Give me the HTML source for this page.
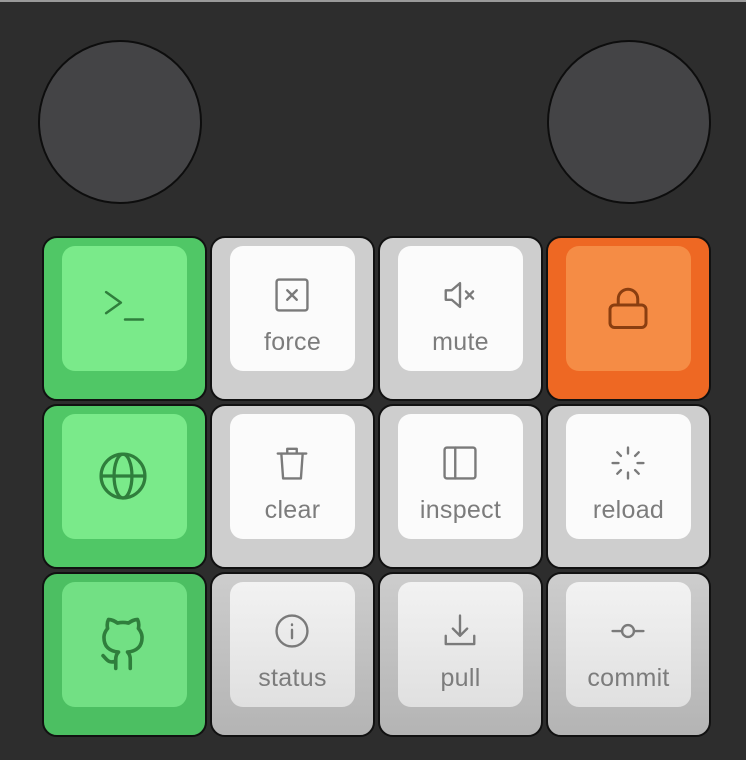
<!DOCTYPE html>
<html><head><style>
html,body{margin:0;padding:0}
body{width:746px;height:760px;background:#2d2d2d;position:relative;overflow:hidden;font-family:"Liberation Sans",sans-serif;border-top:2px solid #9a9a9a;box-sizing:border-box}
.c{position:absolute;width:164px;height:164px;border-radius:50%;background:#444446;border:2px solid #0d0d0d;top:38px;box-sizing:border-box}
.k{position:absolute;width:165px;height:165px;border:2px solid #111;border-radius:15px;box-sizing:border-box}
.i{position:absolute;left:18px;top:8px;width:125px;height:125px;border-radius:13px;text-align:center}
.i svg{position:absolute;left:43px;top:30px;width:38px;height:38px;fill:none;stroke-width:2;stroke-linecap:round;stroke-linejoin:round}
.i span{position:absolute;left:0;right:0;top:82px;font-size:25px;color:#7c7c7c;letter-spacing:.3px}
.g{background:#50c766}.g .i{background:#7aea8a}.g svg{stroke:#2f7e3c}
.w{background:#cecece}.w .i{background:#fbfbfb}.w svg{stroke:#7a7a7a}
.w2{background:linear-gradient(#cdcdcd,#b4b4b4)}.w2 .i{background:linear-gradient(#f2f2f2,#e0e0e0)}.w2 svg{stroke:#7a7a7a}
.o{background:#ee6823}.o .i{background:#f58c45}.o svg{stroke:#8a3e10}
.g3{background:#4cbf62}.g3 .i{background:#72e084}.g3 svg{stroke:#2f7e3c}
</style></head><body>
<div class="c" style="left:38px"></div>
<div class="c" style="left:547px"></div>

<div class="k g" style="left:42px;top:234px"><div class="i"><svg viewBox="0 0 40 40" style="width:42px;height:42px;left:41px;top:43px;stroke-width:2.4"><path d="M3 3l14 10-14 10M21 29h17"/></svg></div></div>
<div class="k w" style="left:210px;top:234px"><div class="i"><svg viewBox="0 0 32 32"><rect x="3" y="3" width="26" height="26" rx="2"/><path d="M12 12l8 8M20 12l-8 8"/></svg><span>force</span></div></div>
<div class="k w" style="left:378px;top:234px"><div class="i"><svg viewBox="0 0 32 32"><path d="M4 12h5l7-6v20l-7-6H4z"/><path d="M21 13l6 6M27 13l-6 6"/></svg><span>mute</span></div></div>
<div class="k o" style="left:546px;top:234px"><div class="i"><svg viewBox="0 0 32 32" style="width:48px;height:48px;left:38px;top:38px"><rect x="4" y="14" width="24" height="15" rx="3"/><path d="M9.5 14V10a6.5 6.5 0 0 1 13 0v4"/></svg></div></div>

<div class="k g" style="left:42px;top:402px"><div class="i"><svg viewBox="0 0 32 32" style="width:52px;height:52px;left:35px;top:36px"><circle cx="16" cy="16" r="13.5"/><ellipse cx="16" cy="16" rx="5.5" ry="13.5"/><path d="M3 16h26"/></svg></div></div>
<div class="k w" style="left:210px;top:402px"><div class="i"><svg viewBox="0 0 32 32"><path d="M4 8h24M12 8V4h8v4M7 8l1.5 21h15L25 8"/></svg><span>clear</span></div></div>
<div class="k w" style="left:378px;top:402px"><div class="i"><svg viewBox="0 0 32 32"><rect x="3" y="3" width="26" height="26" rx="2"/><path d="M12 3v26"/></svg><span>inspect</span></div></div>
<div class="k w" style="left:546px;top:402px"><div class="i"><svg viewBox="0 0 32 32"><path d="M16 3v5M16 24v5M3 16h5M24 16h5M7 7l3 3M22 22l3 3M25 7l-3 3M10 22l-3 3"/></svg><span>reload</span></div></div>

<div class="k g3" style="left:42px;top:570px"><div class="i"><svg viewBox="0 0 32 32" style="width:58px;height:58px;left:32px;top:32px"><path d="M12 30v-5c0-2 .5-3 1.5-4-5-.5-8-3-8-8 0-2 .7-3.5 2-5-.3-1.5-.3-3.5.5-5 2 0 3.5 1 5 2 2-.5 4-.5 6 0 1.5-1 3-2 5-2 .8 1.5.8 3.5.5 5 1.3 1.5 2 3 2 5 0 5-3 7.5-8 8 1 1 1.5 2 1.5 4v5M12 26c-4 1.5-5-1-7-3"/></svg></div></div>
<div class="k w2" style="left:210px;top:570px"><div class="i"><svg viewBox="0 0 32 32"><circle cx="16" cy="16" r="13"/><path d="M16 15v7M16 10.5v.5"/></svg><span>status</span></div></div>
<div class="k w2" style="left:378px;top:570px"><div class="i"><svg viewBox="0 0 32 32"><path d="M16 3v17M10 14l6 6 6-6M4 20v7h24v-7"/></svg><span>pull</span></div></div>
<div class="k w2" style="left:546px;top:570px"><div class="i"><svg viewBox="0 0 32 32"><circle cx="16" cy="16" r="5"/><path d="M3 16h8M21 16h8"/></svg><span>commit</span></div></div>
</body></html>
